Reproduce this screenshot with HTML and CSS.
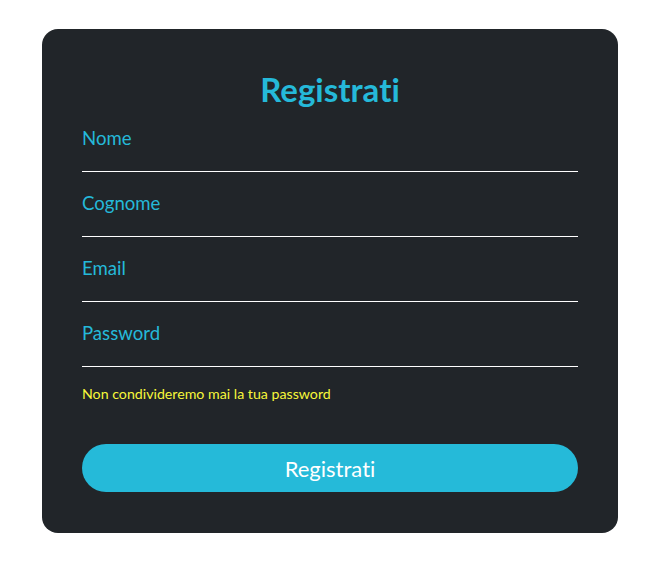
FILE: index.html
```html
<!DOCTYPE html>
<html lang="it">
<head>
<meta charset="utf-8">
<title>Registrati</title>
<link rel="stylesheet" href="styles.css">
</head>
<body>
<div class="page">
  <form class="card">
    <h1 class="title">Registrati</h1>
    <input class="field" type="text" placeholder="Nome">
    <input class="field" type="text" placeholder="Cognome">
    <input class="field" type="email" placeholder="Email">
    <input class="field" type="password" placeholder="Password">
    <p class="hint">Non condivideremo mai la tua password</p>
    <button class="btn" type="button">Registrati</button>
  </form>
</div>
</body>
</html>
```
FILE: styles.css
```css
html, body {
  margin: 0;
  padding: 0;
  background: #ffffff;
  font-family: Lato, "Noto Sans", sans-serif;
  font-variant-ligatures: none;
}
.page {
  padding: 29px 0 0 42px;
}
.card {
  width: 576px;
  height: 504px;
  box-sizing: border-box;
  background: #212529;
  border-radius: 16px;
  padding: 40px 40px 0 40px;
  display: flex;
  flex-direction: column;
}
.title {
  margin: -2px 0 10px;
  text-align: center;
  color: #25b9d9;
  font-size: 33px;
  line-height: 44px;
  font-weight: 700;
}
.field {
  display: block;
  width: 100%;
  box-sizing: border-box;
  background: transparent;
  border: 0;
  border-bottom: 1px solid #ffffff;
  padding: 5px 0 21px;
  font-family: inherit;
  font-variant-ligatures: none;
  font-size: 18.6px;
  line-height: 24px;
  color: #25b9d9;
  outline: none;
  margin-bottom: 14px;
}
.field::placeholder {
  color: #25b9d9;
  opacity: 1;
}
.hint {
  margin: 4px 0 0;
  color: #f7f73a;
  font-size: 14.2px;
  line-height: 18px;
}
.btn {
  margin-top: 41px;
  height: 48px;
  border: 0;
  border-radius: 24px;
  background: #25bad9;
  color: #ffffff;
  font-family: inherit;
  font-variant-ligatures: none;
  font-size: 22px;
  width: 100%;
}
```
